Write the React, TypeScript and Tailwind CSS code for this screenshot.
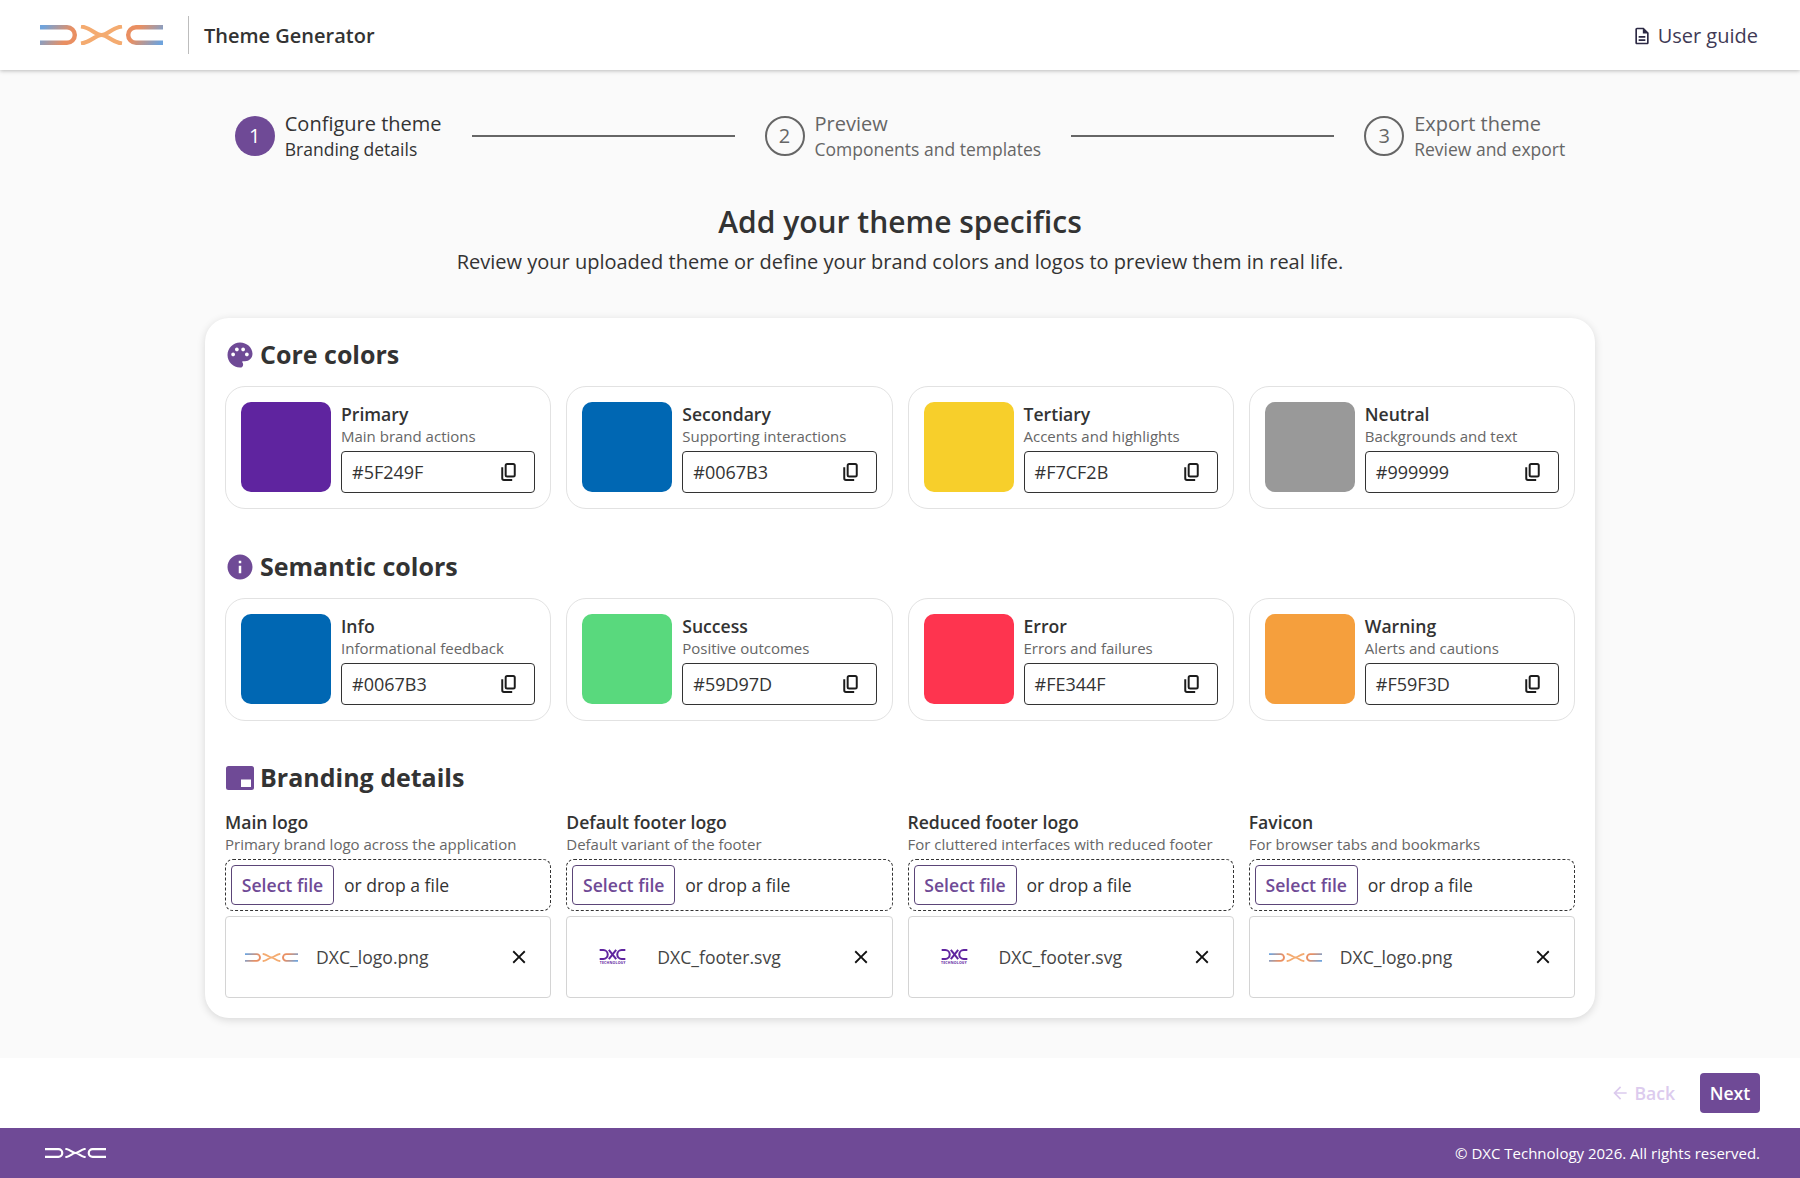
import { MdArrowBack, MdClose, MdInfo, MdOutlineDescription, MdPalette } from "react-icons/md";

const coreColors = [
  { name: "Primary", hint: "Main brand actions", hex: "#5F249F" },
  { name: "Secondary", hint: "Supporting interactions", hex: "#0067B3" },
  { name: "Tertiary", hint: "Accents and highlights", hex: "#F7CF2B" },
  { name: "Neutral", hint: "Backgrounds and text", hex: "#999999" },
];

const semanticColors = [
  { name: "Info", hint: "Informational feedback", hex: "#0067B3" },
  { name: "Success", hint: "Positive outcomes", hex: "#59D97D" },
  { name: "Error", hint: "Errors and failures", hex: "#FE344F" },
  { name: "Warning", hint: "Alerts and cautions", hex: "#F59F3D" },
];

const brandingItems = [
  { name: "Main logo", hint: "Primary brand logo across the application", file: "DXC_logo.png", stacked: false },
  { name: "Default footer logo", hint: "Default variant of the footer", file: "DXC_footer.svg", stacked: true },
  { name: "Reduced footer logo", hint: "For cluttered interfaces with reduced footer", file: "DXC_footer.svg", stacked: true },
  { name: "Favicon", hint: "For browser tabs and bookmarks", file: "DXC_logo.png", stacked: false },
];

function DxcMark({ id, plain, width, height }: { id: string; plain?: string; width: number; height: number }) {
  const side = plain ?? `url(#${id}-side)`;
  const rightSide = plain ?? `url(#${id}-right)`;
  const mid = plain ?? "#F4AB70";
  return (
    <svg width={width} height={height} viewBox="0 0 123 20" fill="none" className="shrink-0">
      <defs>
        <linearGradient id={`${id}-side`} gradientUnits="userSpaceOnUse" x1="4" y1="0" x2="26" y2="14">
          <stop offset="0" stopColor="#6FA3DC" />
          <stop offset="1" stopColor="#E98F62" />
        </linearGradient>
        <linearGradient id={`${id}-right`} gradientUnits="userSpaceOnUse" x1="119" y1="20" x2="97" y2="6">
          <stop offset="0" stopColor="#6FA3DC" />
          <stop offset="1" stopColor="#E98F62" />
        </linearGradient>
      </defs>
      <path d="M0 2.2H27a7.8 7.8 0 0 1 0 15.6H0" stroke={side} strokeWidth="4.4" />
      <path d="M96 2.2H123M96 17.8H123M96 2.2a7.8 7.8 0 0 0 0 15.6" stroke={rightSide} strokeWidth="4.4" />
      <path d="M41 1.5C52 3 55 10 61.5 10S71 3 82 1.5M41 18.5C52 17 55 10 61.5 10S71 17 82 18.5" stroke={mid} strokeWidth="4.2" />
    </svg>
  );
}

function FooterMark() {
  return (
    <div className="flex w-[28px] shrink-0 flex-col items-center">
      <svg width="27" height="11" viewBox="0 0 28 12" fill="none">
        <path d="M0 1.2H4a4.8 4.8 0 0 1 0 9.6H0" stroke="#5F249F" strokeWidth="2.2" />
        <path d="M28 1.2H24a4.8 4.8 0 0 0 0 9.6H28" stroke="#5F249F" strokeWidth="2.2" />
        <path d="M10 1L18 11M18 1L10 11" stroke="#5F249F" strokeWidth="2.2" />
      </svg>
      <span className="mt-[1px] text-[3.5px] font-bold leading-[4px] tracking-[0.2px] text-[#5F249F]">TECHNOLOGY</span>
    </div>
  );
}

function CopyIcon() {
  return (
    <svg width="15" height="18" viewBox="0 0 17 21" fill="none" stroke="#1c1c1c" strokeWidth="2.3" className="shrink-0">
      <rect x="5.2" y="1.2" width="10.6" height="14.6" rx="1.8" />
      <path d="M1.2 5v12.8a2 2 0 0 0 2 2h9.6" />
    </svg>
  );
}

function Step({ n, title, sub, active }: { n: number; title: string; sub: string; active?: boolean }) {
  return (
    <div className="flex items-center gap-[10px]">
      {active ? (
        <div className="flex h-[40px] w-[40px] items-center justify-center rounded-full bg-[#6F4A96] text-[20px] text-white">{n}</div>
      ) : (
        <div className="flex h-[40px] w-[40px] items-center justify-center rounded-full border-2 border-[#666666] text-[20px] text-[#666666]">{n}</div>
      )}
      <div className={active ? "text-[#333333]" : "text-[#666666]"}>
        <div className="text-[20px] leading-[27px]">{title}</div>
        <div className="text-[17.5px] leading-[25px]">{sub}</div>
      </div>
    </div>
  );
}

function ColorCard({ name, hint, hex }: { name: string; hint: string; hex: string }) {
  return (
    <div className="flex gap-[10px] rounded-[20px] border border-[#e2e2e2] bg-white px-[15px] pb-[15px] pt-[15px]">
      <div className="h-[90px] w-[90px] shrink-0 rounded-[10px]" style={{ backgroundColor: hex }} />
      <div className="min-w-0 flex-1">
        <div className="text-[17.6px] font-semibold leading-[24px] text-[#333333]">{name}</div>
        <div className="text-[15px] leading-[20px] text-[#666666]">{hint}</div>
        <div className="mt-[5px] flex h-[42px] items-center justify-between rounded-[4px] border border-[#333333] pl-[10px] pr-[18px]">
          <span className="text-[18px] text-[#333333]">{hex}</span>
          <CopyIcon />
        </div>
      </div>
    </div>
  );
}

function FileColumn({ name, hint, file, stacked }: { name: string; hint: string; file: string; stacked: boolean }) {
  return (
    <div>
      <div className="text-[17.6px] font-semibold leading-[24px] text-[#333333]">{name}</div>
      <div className="text-[15px] leading-[20px] text-[#666666]">{hint}</div>
      <div className="mt-[5px] flex h-[52px] items-center gap-[10px] rounded-[8px] border border-dashed border-[#333333] px-[5px]">
        <div className="flex h-[40px] w-[103px] items-center justify-center rounded-[4px] border border-[#5B4578] text-[17.6px] font-semibold text-[#6F4A96]">
          Select file
        </div>
        <span className="text-[17.6px] text-[#333333]">or drop a file</span>
      </div>
      <div className="mt-[5px] flex h-[82px] items-center rounded-[4px] border border-[#d4d4d4] pl-[19px] pr-[20px]">
        <div className="flex w-[53px] justify-center">
          {stacked ? <FooterMark /> : <DxcMark id={`small-${name.replace(/\s/g, "")}`} width={53} height={9} />}
        </div>
        <span className="ml-[18px] flex-1 text-[17.6px] text-[#444444]">{file}</span>
        <MdClose className="h-[22px] w-[22px] text-[#111111]" />
      </div>
    </div>
  );
}

function SectionTitle({ icon, label }: { icon: React.ReactNode; label: string }) {
  return (
    <div className="flex h-[34px] items-center gap-[5px]">
      <div className="flex w-[30px] justify-center">{icon}</div>
      <h2 className="text-[25px] font-bold text-[#333333]">{label}</h2>
    </div>
  );
}

export default function App() {
  return (
    <div className="flex min-h-screen flex-col bg-white font-['Open_Sans',sans-serif]">
      {/* Top bar */}
      <header className="relative z-10 flex h-[70px] items-center justify-between bg-white pl-[40px] pr-[42px] shadow-[0_1px_4px_rgba(0,0,0,0.25)]">
        <div className="flex items-center">
          <DxcMark id="main" width={123} height={20} />
          <div className="ml-[25px] h-[38px] w-px bg-[#bdbdbd]" />
          <span className="ml-[15px] pt-[1px] text-[20px] font-semibold text-[#333333]">Theme Generator</span>
        </div>
        <div className="flex items-center gap-[6px] pt-[1px] text-[20px] text-[#3f3a55]">
          <MdOutlineDescription className="h-[20px] w-[20px] text-[#2d2a45]" />
          User guide
        </div>
      </header>

      <main className="flex flex-1 flex-col items-center bg-[#fafafa] pt-[40px]">
        {/* Stepper */}
        <div className="flex items-center">
          <Step n={1} title="Configure theme" sub="Branding details" active />
          <div className="mx-[30px] h-[1.5px] w-[263px] bg-[#666666]" />
          <Step n={2} title="Preview" sub="Components and templates" />
          <div className="mx-[30px] h-[1.5px] w-[263px] bg-[#666666]" />
          <Step n={3} title="Export theme" sub="Review and export" />
        </div>

        <h1 className="mt-[41px] text-[30px] font-semibold leading-[38px] text-[#333333]">Add your theme specifics</h1>
        <p className="mt-[7px] text-[20px] leading-[27px] text-[#333333]">
          Review your uploaded theme or define your brand colors and logos to preview them in real life.
        </p>

        {/* Main card */}
        <section className="mt-[43px] w-[1390px] rounded-[24px] bg-white px-[20px] pb-[20px] pt-[20px] shadow-[0_2px_8px_rgba(0,0,0,0.14)]">
          <SectionTitle icon={<MdPalette className="h-[32px] w-[32px] text-[#6F4A96]" />} label="Core colors" />
          <div className="mt-[14px] grid grid-cols-4 gap-[15px]">
            {coreColors.map((c) => (
              <ColorCard key={c.name} {...c} />
            ))}
          </div>

          <div className="mt-[41px]">
            <SectionTitle icon={<MdInfo className="h-[32px] w-[32px] text-[#6F4A96]" />} label="Semantic colors" />
          </div>
          <div className="mt-[14px] grid grid-cols-4 gap-[15px]">
            {semanticColors.map((c) => (
              <ColorCard key={c.name} {...c} />
            ))}
          </div>

          <div className="mt-[40px]">
            <SectionTitle
              icon={
                <svg width="28" height="24" viewBox="0 0 28 24">
                  <rect width="28" height="24" rx="2.5" fill="#6F4A96" />
                  <rect x="15" y="13.5" width="10" height="7.5" fill="#ffffff" />
                </svg>
              }
              label="Branding details"
            />
          </div>
          <div className="mt-[15px] grid grid-cols-4 gap-[15px]">
            {brandingItems.map((b) => (
              <FileColumn key={b.name} {...b} />
            ))}
          </div>
        </section>
      </main>

      {/* Wizard actions */}
      <div className="flex h-[70px] items-center justify-end gap-[25px] bg-white pr-[40px]">
        <div className="flex items-center gap-[4px] text-[17.6px] font-semibold text-[#DCCBEE]">
          <MdArrowBack className="h-[20px] w-[20px]" />
          Back
        </div>
        <div className="flex h-[40px] w-[60px] items-center justify-center rounded-[4px] bg-[#6F4A96] text-[17.6px] font-semibold text-white">Next</div>
      </div>

      <footer className="flex h-[50px] items-center justify-between bg-[#6F4A96] pl-[45px] pr-[40px]">
        <DxcMark id="foot" plain="#ffffff" width={61} height={10} />
        <span className="text-[15px] text-white">© DXC Technology 2026. All rights reserved.</span>
      </footer>
    </div>
  );
}
